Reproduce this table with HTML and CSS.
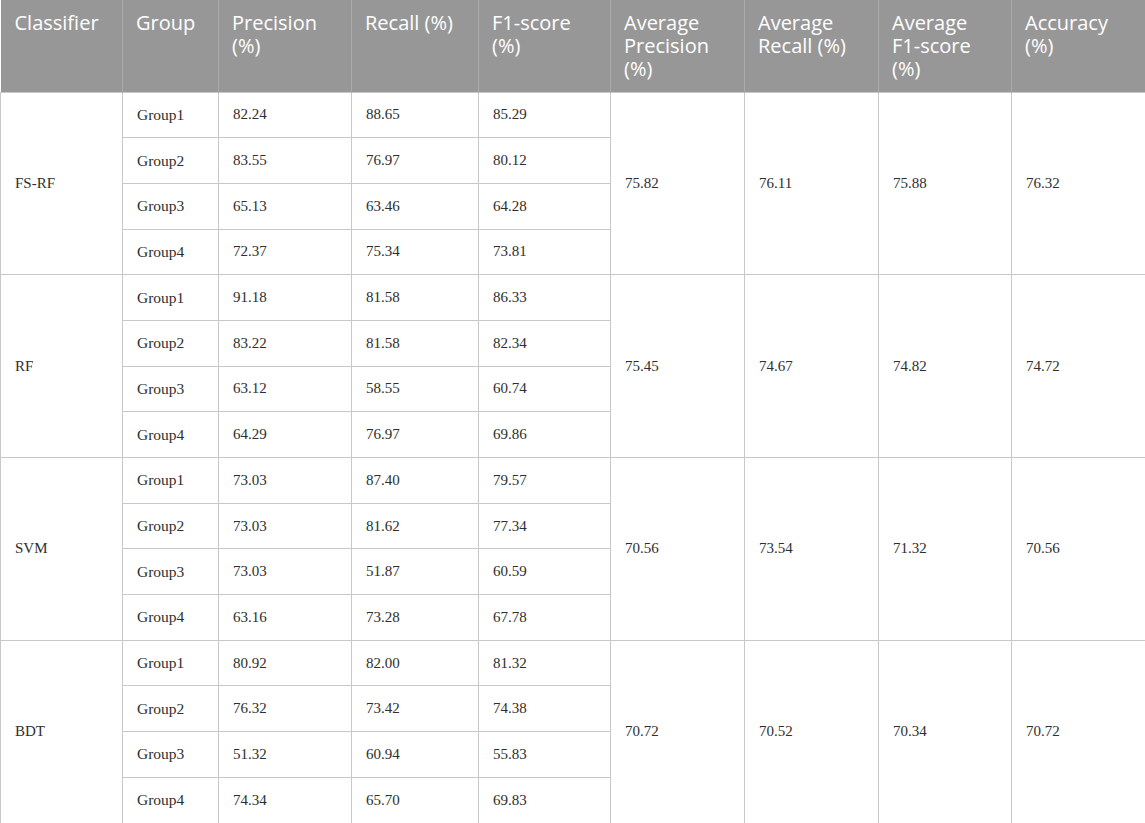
FILE: index.html
```html
<!DOCTYPE html>
<html>
<head>
<meta charset="utf-8">
<link rel="stylesheet" href="styles.css">
</head>
<body>
<table class="results">
<colgroup>
<col class="c1"><col class="c2"><col class="c3"><col class="c4"><col class="c5"><col class="c6"><col class="c7"><col class="c8"><col class="c9">
</colgroup>
<thead>
<tr>
<th>Classifier</th><th>Group</th><th>Precision (%)</th><th>Recall (%)</th><th>F1-score (%)</th><th>Average Precision (%)</th><th>Average Recall (%)</th><th>Average F1-score (%)</th><th>Accuracy (%)</th>
</tr>
</thead>
<tbody>
<tr><td rowspan="4">FS-RF</td><td class="grp">Group1</td><td>82.24</td><td>88.65</td><td>85.29</td><td rowspan="4">75.82</td><td rowspan="4">76.11</td><td rowspan="4">75.88</td><td rowspan="4">76.32</td></tr>
<tr><td class="grp">Group2</td><td>83.55</td><td>76.97</td><td>80.12</td></tr>
<tr><td class="grp">Group3</td><td>65.13</td><td>63.46</td><td>64.28</td></tr>
<tr><td class="grp">Group4</td><td>72.37</td><td>75.34</td><td>73.81</td></tr>
<tr><td rowspan="4">RF</td><td class="grp">Group1</td><td>91.18</td><td>81.58</td><td>86.33</td><td rowspan="4">75.45</td><td rowspan="4">74.67</td><td rowspan="4">74.82</td><td rowspan="4">74.72</td></tr>
<tr><td class="grp">Group2</td><td>83.22</td><td>81.58</td><td>82.34</td></tr>
<tr><td class="grp">Group3</td><td>63.12</td><td>58.55</td><td>60.74</td></tr>
<tr><td class="grp">Group4</td><td>64.29</td><td>76.97</td><td>69.86</td></tr>
<tr><td rowspan="4">SVM</td><td class="grp">Group1</td><td>73.03</td><td>87.40</td><td>79.57</td><td rowspan="4">70.56</td><td rowspan="4">73.54</td><td rowspan="4">71.32</td><td rowspan="4">70.56</td></tr>
<tr><td class="grp">Group2</td><td>73.03</td><td>81.62</td><td>77.34</td></tr>
<tr><td class="grp">Group3</td><td>73.03</td><td>51.87</td><td>60.59</td></tr>
<tr><td class="grp">Group4</td><td>63.16</td><td>73.28</td><td>67.78</td></tr>
<tr><td rowspan="4">BDT</td><td class="grp">Group1</td><td>80.92</td><td>82.00</td><td>81.32</td><td rowspan="4">70.72</td><td rowspan="4">70.52</td><td rowspan="4">70.34</td><td rowspan="4">70.72</td></tr>
<tr><td class="grp">Group2</td><td>76.32</td><td>73.42</td><td>74.38</td></tr>
<tr><td class="grp">Group3</td><td>51.32</td><td>60.94</td><td>55.83</td></tr>
<tr><td class="grp">Group4</td><td>74.34</td><td>65.70</td><td>69.83</td></tr>
</tbody>
</table>
</body>
</html>
```
FILE: styles.css
```css
html, body {
  margin: 0;
  padding: 0;
  background: #fff;
}
.results {
  width: 1145px;
  border-collapse: collapse;
  table-layout: fixed;
  font-family: "Liberation Serif", "Times New Roman", serif;
  color: #2e2e2e;
}
.c1 { width: 122px; }
.c2 { width: 96px; }
.c3 { width: 133px; }
.c4 { width: 127px; }
.c5 { width: 132px; }
.c6 { width: 134px; }
.c7 { width: 134px; }
.c8 { width: 133px; }
.c9 { width: 134px; }
.results th {
  background: #979797;
  color: #fff;
  font-family: "Open Sans", "Liberation Sans", sans-serif;
  font-weight: 400;
  font-size: 20px;
  line-height: 23px;
  text-align: left;
  vertical-align: top;
  height: 92px;
  box-sizing: border-box;
  padding: 11px 13px 10px 13px;
  border-left: 1px solid #ababab;
}
.results th:first-child {
  border-left: none;
  padding-left: 14px;
}
.results td {
  font-size: 15px;
  height: 45.6875px;
  box-sizing: border-box;
  padding: 0 14px;
  border: 1px solid #c8c8c8;
  vertical-align: middle;
}
.results td.grp {
  font-size: 15.5px;
}
```
